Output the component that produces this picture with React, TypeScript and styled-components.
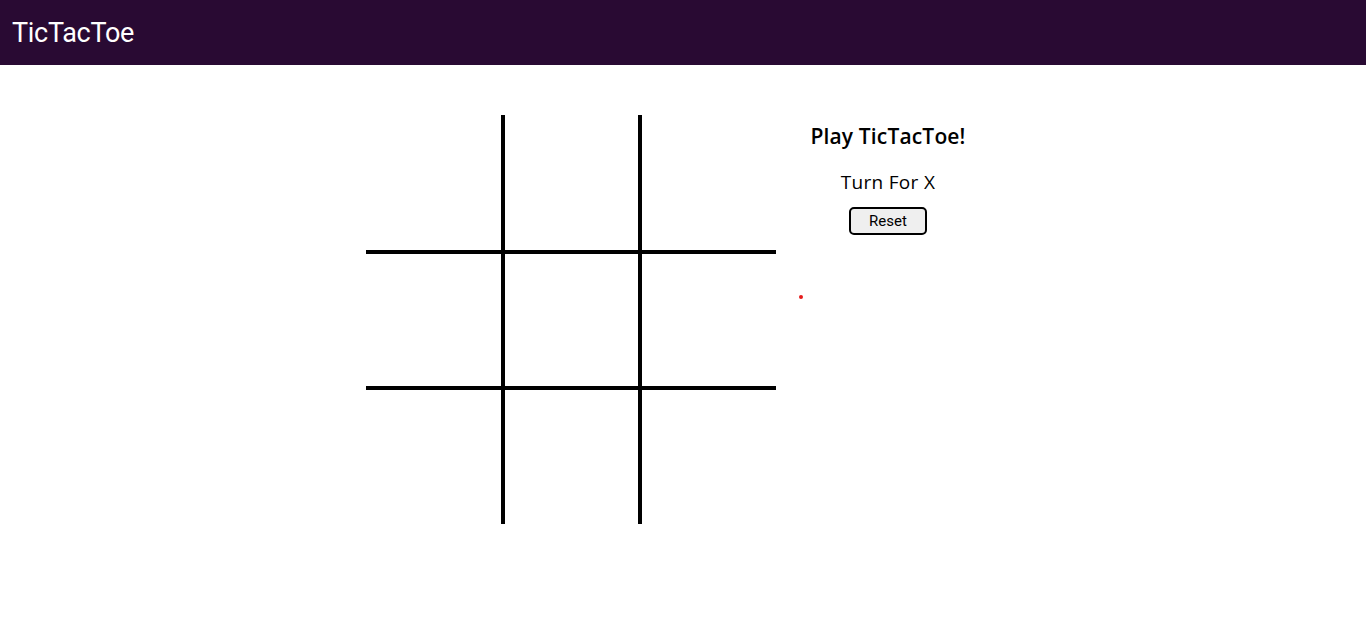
import React from "react";
import styled, { createGlobalStyle } from "styled-components";

const Global = createGlobalStyle`
  html, body { margin: 0; padding: 0; background: #fff; }
  body { font-family: Roboto, "Liberation Sans", sans-serif; }
`;

const Header = styled.header`
  height: 65px;
  background: #290a33;
  display: flex;
  align-items: center;
  padding: 0 12px;
  box-sizing: border-box;
`;

const Brand = styled.h1`
  margin: 0;
  color: #fff;
  font-family: Roboto, "Liberation Sans", sans-serif;
  font-weight: 400;
  font-size: 27px;
  letter-spacing: -0.3px;
`;

const Main = styled.main`
  display: flex;
  justify-content: center;
  align-items: flex-start;
  padding-top: 50px;
`;

const Board = styled.div`
  display: grid;
  grid-template-columns: 139px 137px 134px;
  grid-template-rows: 139px 136px 134px;
`;

const Cell = styled.div<{ $right: boolean; $bottom: boolean }>`
  border-right: ${(p) => (p.$right ? "4px solid #000" : "none")};
  border-bottom: ${(p) => (p.$bottom ? "4px solid #000" : "none")};
`;

const Panel = styled.div`
  width: 224px;
  display: flex;
  flex-direction: column;
  align-items: center;
  font-family: "Open Sans", "Noto Sans", sans-serif;
`;

const Title = styled.h2`
  margin: 7px 0 0;
  font-size: 21px;
  font-weight: 600;
  color: #000;
  line-height: 28px;
  letter-spacing: 0.15px;
`;

const Turn = styled.p`
  margin: 20px 0 0;
  font-size: 19px;
  font-weight: 400;
  line-height: 24px;
  color: #000;
  letter-spacing: 0.3px;
`;

const ResetButton = styled.button`
  margin-top: 13px;
  width: 78px;
  height: 28px;
  border: 2px solid #000;
  border-radius: 5px;
  background: #efefef;
  font-family: Roboto, "Liberation Sans", sans-serif;
  font-size: 15px;
  color: #000;
  padding: 0;
`;

const Message = styled.div`
  align-self: flex-start;
  margin: 60px 0 0 23px;
  width: 4px;
  height: 4px;
  border-radius: 50%;
  background: #e51b1b;
`;

export default function App() {
  const cells = Array.from({ length: 9 }, (_, i) => i);
  return (
    <>
      <Global />
      <Header>
        <Brand>TicTacToe</Brand>
      </Header>
      <Main>
        <Board>
          {cells.map((i) => (
            <Cell key={i} $right={i % 3 !== 2} $bottom={i < 6} />
          ))}
        </Board>
        <Panel>
          <Title>Play TicTacToe!</Title>
          <Turn>Turn For X</Turn>
          <ResetButton>Reset</ResetButton>
          <Message />
        </Panel>
      </Main>
    </>
  );
}
